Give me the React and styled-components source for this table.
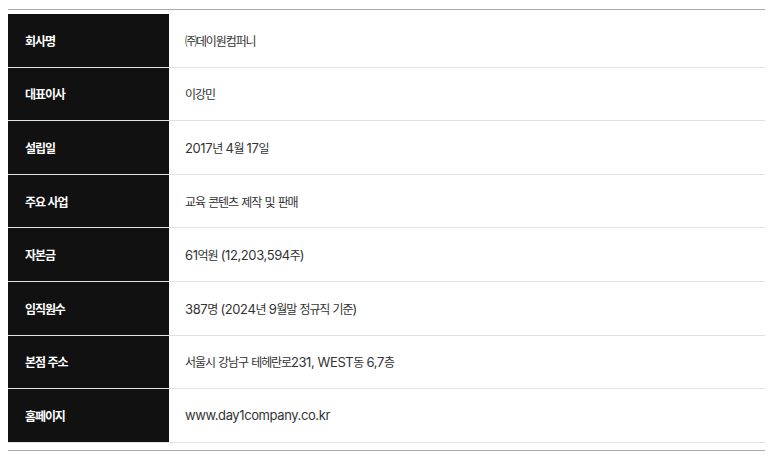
import React from "react";
import styled, { createGlobalStyle } from "styled-components";

const GlobalStyle = createGlobalStyle`
  body {
    margin: 9px 12px 8px 8px;
    background: #fff;
    font-family: Inter, "Noto Sans CJK KR", sans-serif;
  }
`;

const rows = [
  ["회사명", "㈜데이원컴퍼니"],
  ["대표이사", "이강민"],
  ["설립일", "2017년 4월 17일"],
  ["주요 사업", "교육 콘텐츠 제작 및 판매"],
  ["자본금", "61억원 (12,203,594주)"],
  ["임직원수", "387명 (2024년 9월말 정규직 기준)"],
  ["본점 주소", "서울시 강남구 테헤란로231, WEST동 6,7층"],
  ["홈페이지", "www.day1company.co.kr"],
];

// hangul runs are set a touch narrower, like the original web font
function Text({ children }) {
  const parts = children.split(/([\uAC00-\uD7A3\u3200-\u321E]+)/);
  return (
    <span>
      {parts.map((p, i) =>
        i % 2 ? <Ko key={i}>{p}</Ko> : <React.Fragment key={i}>{p}</React.Fragment>
      )}
    </span>
  );
}

function App() {
  return (
    <>
      <GlobalStyle />
      <Table>
        {rows.map(([label, value]) => (
          <Row key={label}>
            <Label><Text>{label}</Text></Label>
            <Value><Text>{value}</Text></Value>
          </Row>
        ))}
      </Table>
    </>
  );
}

const Table = styled.div`
  border-top: 1px solid #aaa;
  border-bottom: 1px solid #aaa;
  padding: 4px 0 7px;
`;

const Row = styled.div`
  display: grid;
  grid-template-columns: 161px 1fr;
  height: 53.6px;
  box-sizing: border-box;
  border-bottom: 1px solid #e2e2e2;
`;

const Label = styled.div`
  background: #111;
  color: #fff;
  font-size: 13px;
  font-weight: 700;
  letter-spacing: -0.5px;
  display: flex;
  align-items: center;
  white-space: pre;
  padding-left: 17px;
`;

const Value = styled.div`
  color: #333;
  font-size: 13px;
  letter-spacing: -0.4px;
  display: flex;
  align-items: center;
  white-space: pre;
  padding-left: 16px;
`;

const Ko = styled.span`
  font-size: 12px;
  letter-spacing: -1.1px;
`;

export default App;
